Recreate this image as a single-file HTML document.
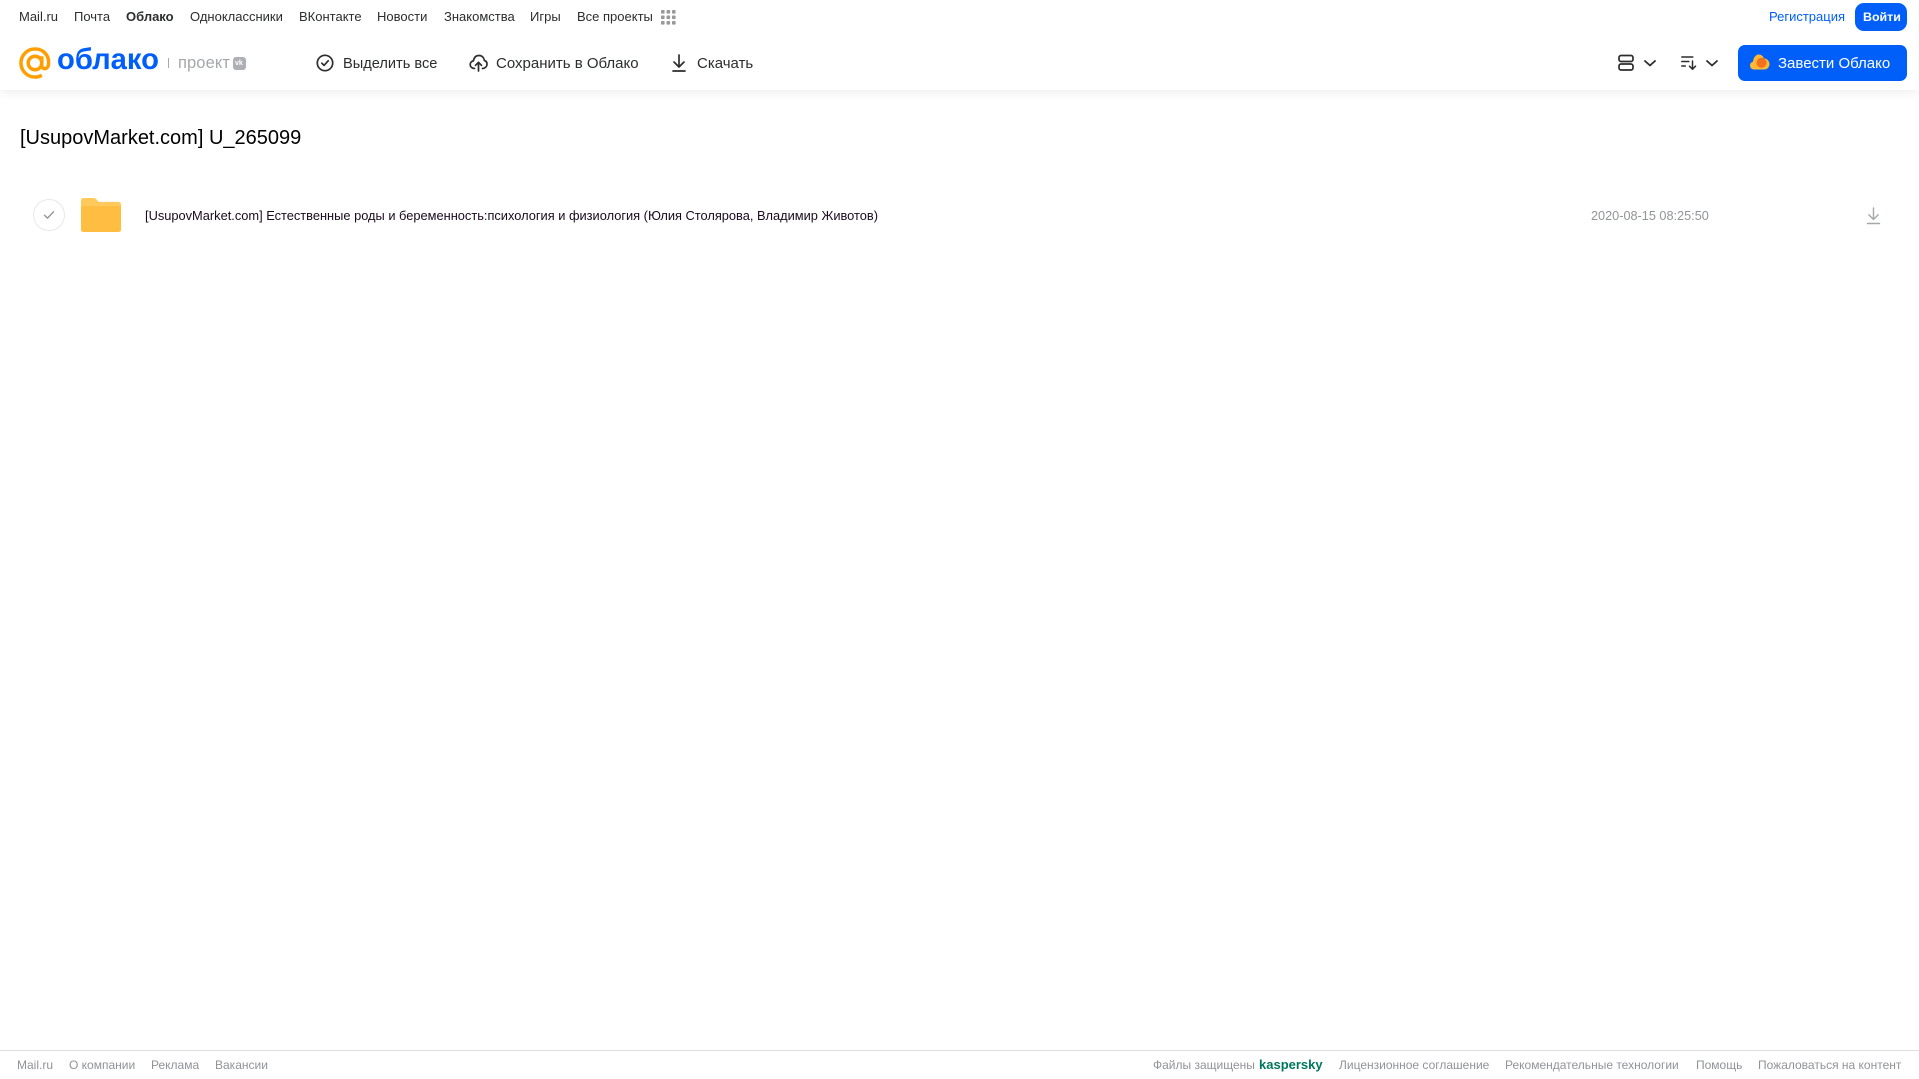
<!DOCTYPE html>
<html lang="ru"><head><meta charset="utf-8"><title>Облако</title>
<style>
html,body{margin:0;padding:0;width:1919px;height:1079px;overflow:hidden;background:#fff;font-family:"Liberation Sans","DejaVu Sans",sans-serif;color:#2c2d2e}
.t{position:absolute;white-space:nowrap;line-height:1}
.n{font-size:13px;top:10px;color:#2c2d2e}
.b{font-size:15px;top:56px;color:#2c2d2e}
.f{font-size:12px;top:1059px;color:#919399}
svg{position:absolute;overflow:visible}
</style></head><body>
<div style="position:absolute;left:0;top:0;width:1919px;height:90px;background:#fff;box-shadow:0 2px 10px rgba(0,0,0,.08)"></div>

<span class="t n" style="left:19px">Mail.ru</span>
<span class="t n" style="left:74px">Почта</span>
<span class="t n" style="left:126px;font-weight:bold">Облако</span>
<span class="t n" style="left:190px">Одноклассники</span>
<span class="t n" style="left:299px">ВКонтакте</span>
<span class="t n" style="left:377px">Новости</span>
<span class="t n" style="left:444px">Знакомства</span>
<span class="t n" style="left:530px">Игры</span>
<span class="t n" style="left:577px">Все проекты</span>
<svg style="left:661px;top:10px" width="15" height="15" fill="#999">
<rect x="0" y="0" width="3.6" height="3.6" rx=".8"/><rect x="5.5" y="0" width="3.6" height="3.6" rx=".8"/><rect x="11" y="0" width="3.6" height="3.6" rx=".8"/>
<rect x="0" y="5.5" width="3.6" height="3.6" rx=".8"/><rect x="5.5" y="5.5" width="3.6" height="3.6" rx=".8"/><rect x="11" y="5.5" width="3.6" height="3.6" rx=".8"/>
<rect x="0" y="11" width="3.6" height="3.6" rx=".8"/><rect x="5.5" y="11" width="3.6" height="3.6" rx=".8"/><rect x="11" y="11" width="3.6" height="3.6" rx=".8"/></svg>

<span class="t n" style="left:1769px;color:#005ff9">Регистрация</span>
<div style="position:absolute;left:1855px;top:3px;width:52px;height:28px;background:#005ff9;border-radius:9px"></div>
<span class="t n" style="left:1863px;color:#fff;font-weight:bold;font-size:12.4px;top:10.500px">Войти</span>

<!-- logo -->
<svg style="left:19px;top:47px" width="32" height="32" viewBox="0 0 33 33" fill="none" stroke="#ff9e00" stroke-width="3.6">
<circle cx="16.5" cy="16.5" r="7"/>
<path d="M23.5 9.5v9.5c0 4.600 6.600 4.600 7 -1.500C31.300 8.500 25 2 16.500 2 8.500 2 2 8.500 2 16.500S8.500 31 16.500 31c2.800 0 5-.7 7-1.800"/></svg>
<span class="t" style="left:57px;top:46px;font-size:29.200px;font-weight:bold;color:#005ff9">облако</span>
<div style="position:absolute;left:168px;top:58px;width:1px;height:10px;background:#aaa"></div>
<span class="t" style="left:178px;top:55px;font-size:16.500px;color:#a5a7ab;letter-spacing:.1px">проект</span>
<div style="position:absolute;left:233px;top:57px;width:13px;height:13px;background:#aeb0b5;border-radius:3px"></div>
<span class="t" style="left:235px;top:60px;font-size:7px;font-weight:bold;color:#fff">vk</span>

<!-- toolbar -->
<svg style="left:316px;top:54px" width="18" height="18" viewBox="0 0 18 18" fill="none" stroke="#2c2d2e" stroke-width="1.700" stroke-linecap="round" stroke-linejoin="round"><circle cx="9" cy="9" r="7.700"/><path d="M5.800 9.200l2.200 2.200 4.200-4.600"/></svg>
<span class="t b" style="left:343px;font-size:14.600px;top:57px">Выделить все</span>
<svg style="left:469px;top:54px" width="19" height="18" viewBox="0 0 19 18" fill="none" stroke="#2c2d2e" stroke-width="1.700" stroke-linecap="round" stroke-linejoin="round"><path d="M5.500 14.500C3 14.500 1.200 12.800 1.200 10.600c0-2 1.400-3.400 3.200-3.700C5 3.600 7 1.500 10 1.500c3 0 5 2.200 5.400 5 1.600.4 2.600 1.900 2.600 3.600 0 2.300-1.600 4.200-4.500 4.400"/><path d="M9.500 17V8.500M6.500 11.300l3-3 3 3"/></svg>
<span class="t b" style="left:496px">Сохранить в Облако</span>
<svg style="left:671px;top:54px" width="16" height="18" viewBox="0 0 16 18" fill="none" stroke="#2c2d2e" stroke-width="1.700" stroke-linecap="round" stroke-linejoin="round"><path d="M8 1v11.500M3 8l5 5 5-5M2 17h12"/></svg>
<span class="t b" style="left:697px">Скачать</span>

<!-- right tools -->
<svg style="left:1618px;top:54px" width="16" height="18" viewBox="0 0 16 18" fill="none" stroke="#2c2d2e" stroke-width="1.700"><rect x="1" y="1.500" width="14" height="6" rx="2"/><rect x="1" y="10" width="14" height="6" rx="2"/></svg>
<svg style="left:1644px;top:60px" width="12" height="7" viewBox="0 0 12 7" fill="none" stroke="#2c2d2e" stroke-width="1.800" stroke-linecap="round" stroke-linejoin="round"><path d="M1 1l5 4.500L11 1"/></svg>
<svg style="left:1681px;top:56px" width="16" height="14" viewBox="0 0 16 14" fill="none" stroke="#2c2d2e" stroke-width="1.500" stroke-linecap="round" stroke-linejoin="round"><path d="M.8 1h11M.8 5.500h7M.8 10h3.500M11.500 5v8M8.500 10.200l3 3 3-3"/></svg>
<svg style="left:1706px;top:60px" width="12" height="7" viewBox="0 0 12 7" fill="none" stroke="#2c2d2e" stroke-width="1.800" stroke-linecap="round" stroke-linejoin="round"><path d="M1 1l5 4.500L11 1"/></svg>

<div style="position:absolute;left:1738px;top:45px;width:169px;height:36px;background:#005ff9;border-radius:7px"></div>
<svg style="left:1750px;top:54px" width="20" height="16" viewBox="0 0 20 16"><path d="M4 15.500C1.800 15.500 0 13.700 0 11.500 0 9.600 1.300 8.100 3 7.600 3.400 3.400 6 .5 8.800.5c2.400 0 4.300 1.600 5 3.800 3.200.2 5.700 2.900 5.700 5.800 0 3-2.400 5.400-5.500 5.400z" fill="#ffb833"/><circle cx="11.500" cy="8.800" r="5" fill="#f2711c"/></svg>
<span class="t" style="left:1778px;top:56px;font-size:15px;color:#fff">Завести Облако</span>

<!-- title -->
<span class="t" style="left:20px;top:128px;font-size:20px;color:#000">[UsupovMarket.com] U_265099</span>

<!-- row -->
<div style="position:absolute;left:33px;top:199px;width:30px;height:30px;border:1px solid #e7e8ea;border-radius:50%"></div>
<svg style="left:43px;top:210px" width="12" height="10" viewBox="0 0 12 10" fill="none" stroke="#919399" stroke-width="1.400" stroke-linecap="round" stroke-linejoin="round"><path d="M1.500 5.300l3 2.800 6-6.300"/></svg>
<svg style="left:81px;top:198px" width="40" height="34" viewBox="0 0 40 34"><path d="M0 2.500A2.500 2.500 0 0 1 2.500 0h10c1.600 0 2.500.7 3.500 2l1.500 1.900H37.500A2.500 2.500 0 0 1 40 6.400V31.500A2.500 2.500 0 0 1 37.500 34H2.500A2.500 2.500 0 0 1 0 31.500z" fill="#ffc95c"/><path d="M0 8h40v23.500A2.500 2.500 0 0 1 37.500 34H2.500A2.500 2.500 0 0 1 0 31.500z" fill="#ffbd42"/></svg>
<span class="t" style="left:145px;top:209.500px;font-size:12.840px;color:#1a0a1e">[UsupovMarket.com] Естественные роды и беременность:психология и физиология (Юлия Столярова, Владимир Животов)</span>
<span class="t" style="left:1591px;top:209.500px;font-size:12.700px;color:#919399">2020-08-15 08:25:50</span>
<svg style="left:1866px;top:207px" width="15" height="18" viewBox="0 0 15 18" fill="none" stroke="#a5a7ab" stroke-width="1.400" stroke-linecap="round" stroke-linejoin="round"><path d="M7.500 1v11M2.800 7.800l4.700 4.700 4.700-4.700M1.500 16.500h12"/></svg>

<!-- footer -->
<div style="position:absolute;left:0;top:1050px;width:1919px;height:1px;background:#dcdde0"></div>
<span class="t f" style="left:17px">Mail.ru</span>
<span class="t f" style="left:69px">О компании</span>
<span class="t f" style="left:151px">Реклама</span>
<span class="t f" style="left:215px">Вакансии</span>
<span class="t f" style="left:1153px">Файлы защищены</span>
<span class="t" style="left:1259px;top:1058px;font-size:13px;font-weight:bold;color:#00775e">kaspersky</span>
<span class="t f" style="left:1339px">Лицензионное соглашение</span>
<span class="t f" style="left:1505px">Рекомендательные технологии</span>
<span class="t f" style="left:1696px">Помощь</span>
<span class="t f" style="left:1758px">Пожаловаться на контент</span>
</body></html>
